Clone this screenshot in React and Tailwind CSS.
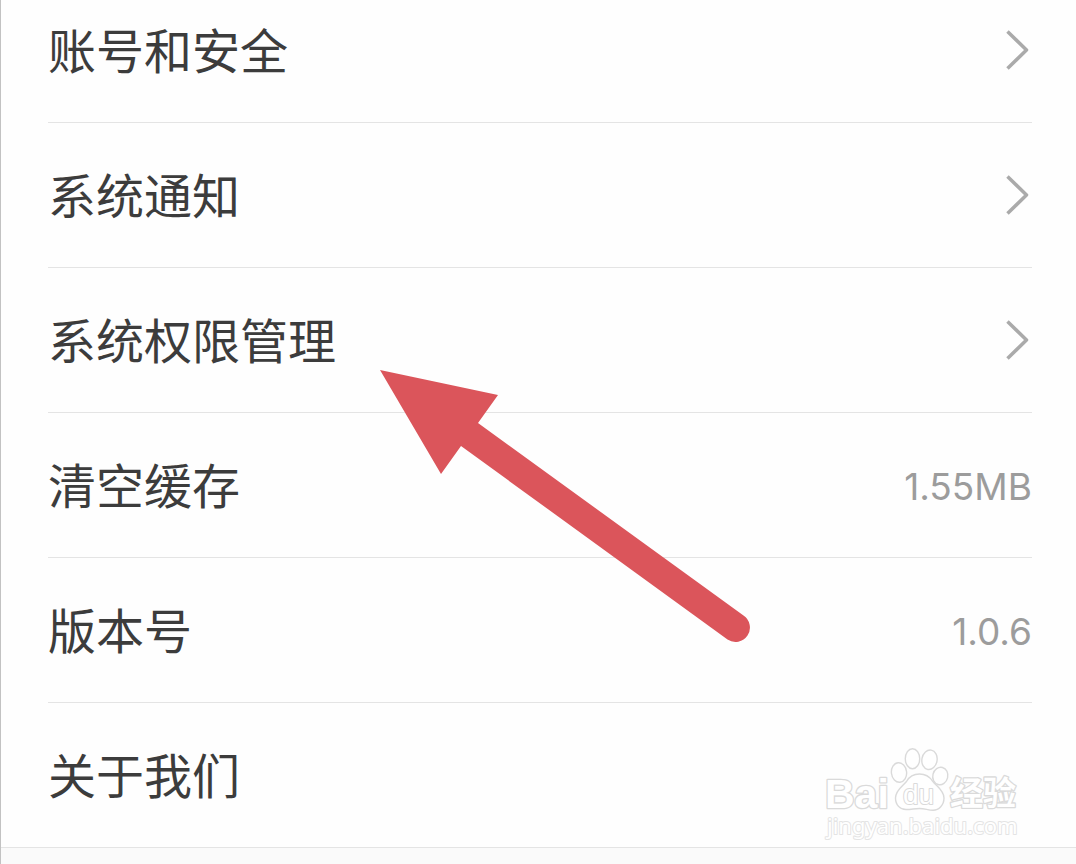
const settings = [
  { label: "账号和安全", href: "#account", chevron: true },
  { label: "系统通知", href: "#notifications", chevron: true },
  { label: "系统权限管理", href: "#permissions", chevron: true },
  { label: "清空缓存", action: true, value: "1.55MB" },
  { label: "版本号", value: "1.0.6" },
  { label: "关于我们", href: "#about" },
];

function Chevron() {
  return (
    <svg className="mr-[3px] h-11 w-6 shrink-0" viewBox="0 0 24 44" fill="none" aria-hidden="true">
      <path d="M2.500 3.500L21.500 22L2.500 40.500" stroke="#aaaaaa" strokeWidth="3.500" strokeLinejoin="round" />
    </svg>
  );
}

function Row({ item }) {
  const rowClass = "flex h-36 w-full items-center justify-between text-left";
  const content = (
    <>
      <span className="pb-1 text-5xl text-[#3c3c3c]">{item.label}</span>
      {item.value && (
        <span className="pt-1 font-[Inter,'Noto_Sans_CJK_SC',sans-serif] text-[37px] text-[#9c9c9c]">{item.value}</span>
      )}
      {item.chevron && <Chevron />}
    </>
  );
  if (item.href) {
    return <a href={item.href} className={rowClass}>{content}</a>;
  }
  if (item.action) {
    return <button type="button" className={rowClass}>{content}</button>;
  }
  return <div className={rowClass}>{content}</div>;
}

function Arrow() {
  return (
    <svg
      className="pointer-events-none absolute top-[370px] left-[379px] h-[274px] w-[372px]"
      viewBox="380 370 372 274"
      aria-hidden="true"
    >
      <path
        d="M380 370L498 395L478 423L743.500 615.500A14 14 0 1 1 727.500 639.500L461 446L441 474Z"
        fill="#db555b"
      />
    </svg>
  );
}

function Watermark() {
  return (
    <svg
      className="pointer-events-none absolute top-[742px] right-[46px] h-[104px] w-[212px]"
      viewBox="8 12 212 104"
      role="img"
      aria-label="Baidu 经验 jingyan.baidu.com"
    >
      <g fill="#ffffff" stroke="#dadada" strokeWidth="1.400" strokeLinejoin="round">
        <ellipse cx="89" cy="42.500" rx="7.600" ry="9.800" transform="rotate(-6 89 42.500)" />
        <ellipse cx="102.500" cy="28.700" rx="7.200" ry="10" />
        <ellipse cx="119.500" cy="29.800" rx="7.600" ry="9.800" transform="rotate(10 119.500 29.800)" />
        <ellipse cx="130.300" cy="46" rx="7.500" ry="8.800" transform="rotate(14 130.300 46)" />
        <path d="M109.500 44C103 44 99 47 96.500 51.500C93 56 85.500 60 85.500 68C85.500 75 90 79.500 96 79.500C102 79.500 104 78.500 109.500 78.500C115 78.500 118 80.300 123 80.300C129 80.300 134 75 134 68C134 60 126 56 122.500 51C119.500 46.500 116 44 109.500 44Z" />
        <g paintOrder="stroke" strokeWidth="2.600">
          <text x="15" y="78" fontFamily="Liberation Sans, sans-serif" fontWeight="700" fontSize="41">Bai</text>
          <text x="140" y="75" fontFamily="Noto Sans CJK SC, sans-serif" fontWeight="700" fontSize="33">经验</text>
        </g>
        <g paintOrder="stroke" strokeWidth="2">
          <text x="93" y="74" fontFamily="Liberation Sans, sans-serif" fontWeight="400" fontSize="28">du</text>
          <text x="17" y="104" fontFamily="Noto Sans, sans-serif" fontSize="22" stroke="#e4e4e4">jingyan.baidu.com</text>
        </g>
      </g>
    </svg>
  );
}

export default function App() {
  return (
    <main className="relative min-h-screen overflow-hidden border-l border-[#c2c2c2] bg-[#fafafa] font-['Noto_Sans_CJK_SC',sans-serif]">
      <ul className="-mt-[22px] border-b border-[#e4e4e4] bg-[#fefefe] pr-11 pl-[47px]">
        {settings.map((item) => (
          <li key={item.label} className="border-b border-[#e4e4e4] last:border-b-0">
            <Row item={item} />
          </li>
        ))}
      </ul>
      <Arrow />
      <Watermark />
    </main>
  );
}
